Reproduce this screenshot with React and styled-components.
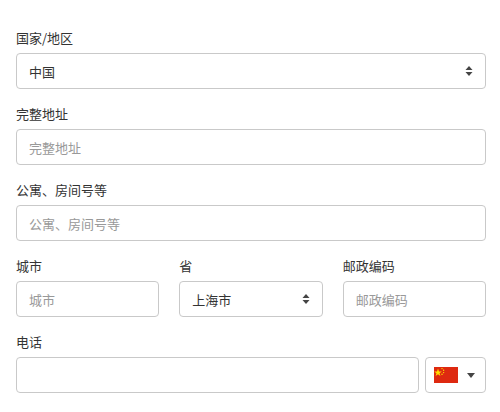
import React from "react";
import styled, { createGlobalStyle } from "styled-components";

const G = createGlobalStyle`
  body { margin: 0; background: #fff; font-family: "Noto Sans CJK SC", "Liberation Sans", sans-serif; }
`;
const Form = styled.div`
  padding: 28px 14px 0 16px; display: flex; flex-direction: column; gap: 15px;
`;
const Field = styled.div`display: flex; flex-direction: column; gap: 5px; flex: ${p => p.$flex || "1"}; min-width: 0;`;
const Label = styled.label`font-size: 13px; color: #333; line-height: 20px; height: 20px;`;
const Box = styled.div`
  height: 36px; box-sizing: border-box; border: 1px solid #c9c9c9; border-radius: 4px;
  display: flex; align-items: center; padding: ${p => (p.$flag ? "0 10px 0 8px" : "0 12px")}; font-size: 13px;
  color: ${p => (p.$ph ? "#999" : "#333")}; justify-content: space-between; background: #fff;
`;
const Row = styled.div`display: flex; gap: ${p => p.$gap || 20}px;`;
const Arrows = () => (
  <svg width="8" height="12" viewBox="0 0 8 12"><path d="M4 1L7.5 5H0.5Z M4 11L7.5 7H0.5Z" fill="#444" /></svg>
);
const Flag = () => (
  <svg width="24" height="16" viewBox="0 0 30 20">
    <rect width="30" height="20" fill="#de2910" />
    <polygon points="5,2 6.2,5.6 9.8,5.6 6.9,7.7 8,11.2 5,9 2,11.2 3.1,7.7 0.2,5.6 3.8,5.6" fill="#ffde00" />
    <circle cx="10" cy="2" r="0.9" fill="#ffde00" /><circle cx="12" cy="4" r="0.9" fill="#ffde00" />
    <circle cx="12" cy="7" r="0.9" fill="#ffde00" /><circle cx="10" cy="9" r="0.9" fill="#ffde00" />
  </svg>
);
const Caret = styled.span`width:0;height:0;border-left:4px solid transparent;border-right:4px solid transparent;border-top:5px solid #444;`;

export default function App() {
  return (
    <Form>
      <G />
      <Field><Label>国家/地区</Label><Box>中国<Arrows /></Box></Field>
      <Field><Label>完整地址</Label><Box $ph>完整地址</Box></Field>
      <Field><Label>公寓、房间号等</Label><Box $ph>公寓、房间号等</Box></Field>
      <Row>
        <Field><Label>城市</Label><Box $ph>城市</Box></Field>
        <Field><Label>省</Label><Box>上海市<Arrows /></Box></Field>
        <Field><Label>邮政编码</Label><Box $ph>邮政编码</Box></Field>
      </Row>
      <Field><Label>电话</Label>
        <Row $gap={6}>
          <Field><Box /></Field>
          <Field $flex="0 0 61px"><Box $flag><Flag /><Caret /></Box></Field>
        </Row>
      </Field>
    </Form>
  );
}
